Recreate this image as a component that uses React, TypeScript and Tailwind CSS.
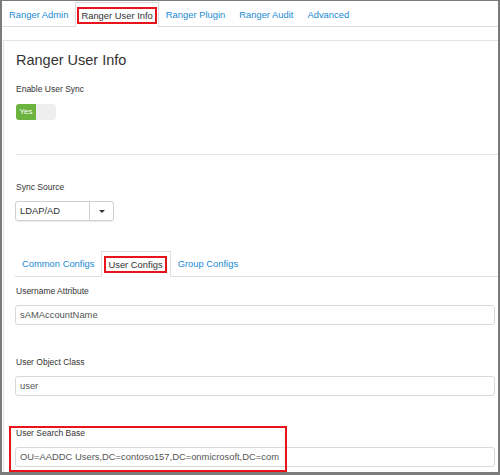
import { useState } from "react";

const navTabs = ["Ranger Admin", "Ranger User Info", "Ranger Plugin", "Ranger Audit", "Advanced"];
const subTabs = ["Common Configs", "User Configs", "Group Configs"];

function Field({ label, value, boxed }: { label: string; value: string; boxed?: boolean }) {
  return (
    <div className="relative pr-[3px]">
      {boxed ? (
        <div className="pointer-events-none absolute left-[-6px] top-[-1px] h-[46px] w-[278px] border-2 border-[#e8141c]" />
      ) : null}
      <div className="pl-px text-[8.5px] leading-[12px] text-[#333]">{label}</div>
      <div className="mt-[8px] flex h-[20px] items-center rounded-[3px] border border-[#d9d9d9] px-[4px] text-[9.4px] text-[#555]">
        {value}
      </div>
    </div>
  );
}

export default function App() {
  const [active] = useState(1);
  const [sub] = useState(1);

  return (
    <div className="h-[475px] w-[500px] overflow-hidden border-x-2 border-t border-b-[3px] border-[#7b7b7b] bg-white font-['Liberation_Sans',Arial,sans-serif]">
      <ul className="flex h-[26px] border-b border-[#dedede] pt-px">
        {navTabs.map((t, i) => (
          <li
            key={t}
            className={
              i === active
                ? "relative -mb-px flex items-center border-x border-t border-[#dedede] bg-white px-[1px]"
                : "flex items-center px-[7px]"
            }
          >
            <span
              className={
                i === active
                  ? "border-2 border-[#e8141c] px-[2px] py-px text-[9.4px] leading-[11px] text-[#333]"
                  : "text-[9.4px] leading-[11px] text-[#1a8ad4]"
              }
            >
              {t}
            </span>
          </li>
        ))}
      </ul>

      <div className="ml-px mt-[13px] h-full border-l border-t border-[#e3e3e3] pl-[11px] pt-[10px]">
        <h2 className="pl-px text-[14.5px] leading-[18px] text-[#333]">Ranger User Info</h2>

        <div className="mt-[14px] pl-px text-[8.5px] leading-[12px] text-[#333]">Enable User Sync</div>
        <div className="ml-px mt-[9px] flex h-[16px] w-[40px] overflow-hidden rounded-[3px]">
          <div className="flex w-[20px] items-center justify-center bg-[#6cb33f] text-[8px] text-white">Yes</div>
          <div className="flex-1 bg-[#eeeeee]" />
        </div>

        <div className="ml-px mt-[34px] border-t border-[#e5e5e5]" />

        <div className="mt-[26px] pl-px text-[8.5px] leading-[12px] text-[#333]">Sync Source</div>
        <div className="mt-[8px] flex h-[20px] w-[99px] rounded-[3px] border border-[#d0d0d0] shadow-[0_1px_1px_rgba(0,0,0,0.08)]">
          <div className="flex flex-1 items-center px-[4px] text-[9.4px] text-[#333]">LDAP/AD</div>
          <div className="flex w-[24px] items-center justify-center border-l border-[#d0d0d0]">
            <span className="h-0 w-0 border-x-[3px] border-t-[3px] border-x-transparent border-t-[#333]" />
          </div>
        </div>

        <ul className="mt-[30px] flex h-[26px] border-b border-[#dedede]">
          {subTabs.map((t, i) => (
            <li
              key={t}
              className={
                i === sub
                  ? "relative -mb-px flex items-center border-x border-t border-[#dedede] bg-white pl-[2px] pr-[3px]"
                  : "flex items-center px-[7px]"
              }
            >
              <span
                className={
                  i === sub
                    ? "border-2 border-[#e8141c] px-[2px] py-px text-[9.4px] leading-[11px] text-[#333]"
                    : "text-[9.4px] leading-[11px] text-[#1a8ad4]"
                }
              >
                {t}
              </span>
            </li>
          ))}
        </ul>

        <div className="mt-[8px] flex flex-col gap-[31px]">
          <Field label="Username Attribute" value="sAMAccountName" />
          <Field label="User Object Class" value="user" />
          <Field label="User Search Base" value="OU=AADDC Users,DC=contoso157,DC=onmicrosoft,DC=com" boxed />
        </div>
      </div>
    </div>
  );
}
